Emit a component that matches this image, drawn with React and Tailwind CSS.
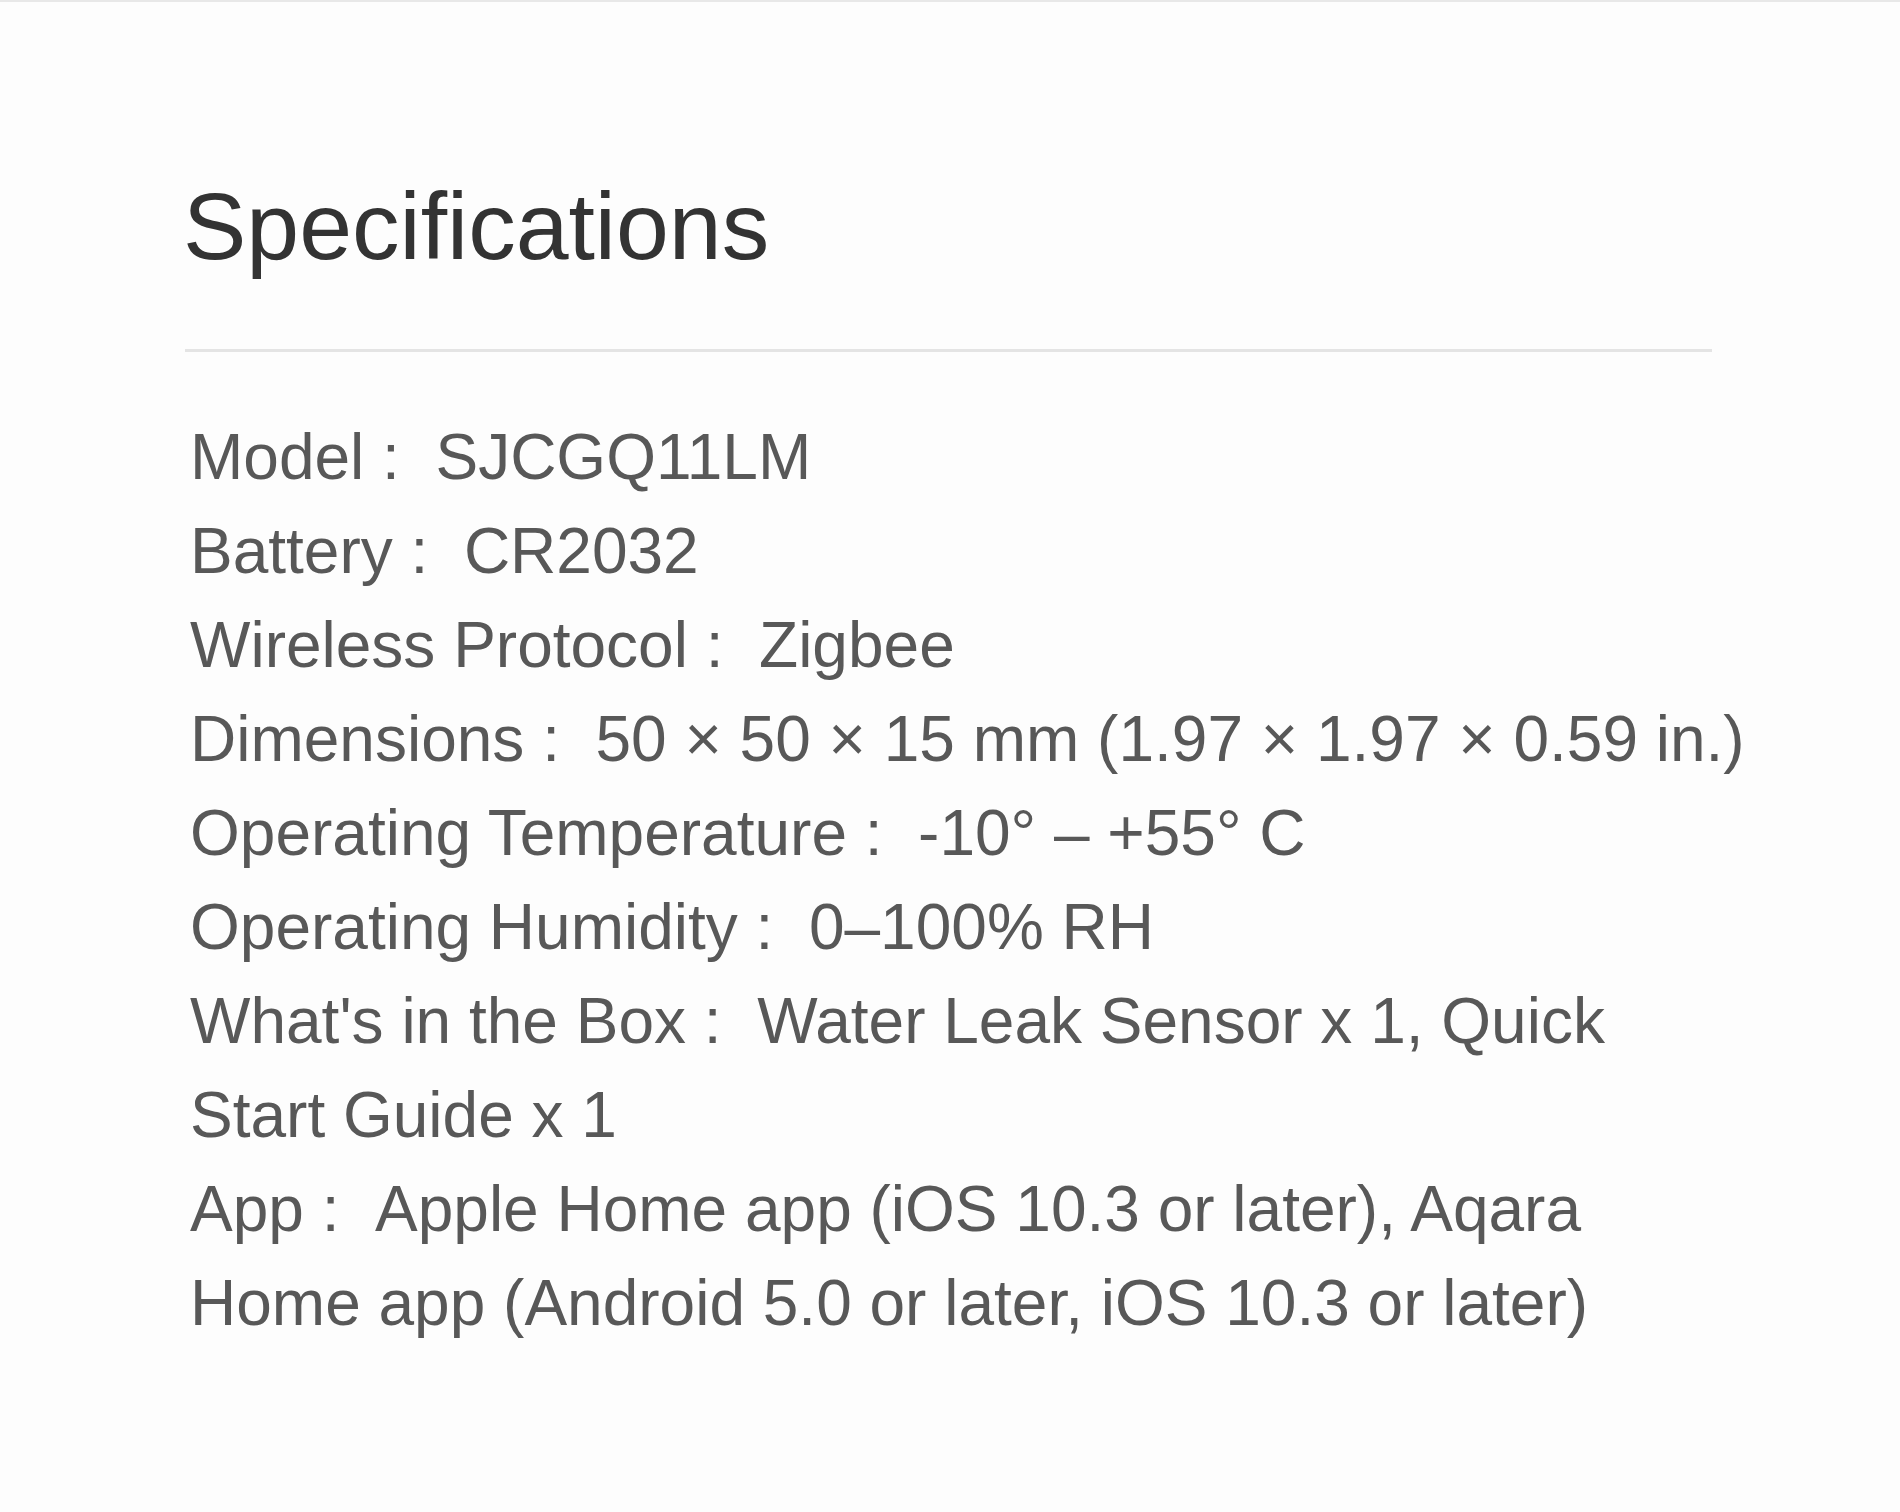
import React from 'react';

const SPECS = [
  { label: 'Model', value: ['SJCGQ11LM'] },
  { label: 'Battery', value: ['CR2032'] },
  { label: 'Wireless Protocol', value: ['Zigbee'] },
  {
    label: 'Dimensions',
    value: ['50 × 50 × 15 mm (1.97 × 1.97 × 0.59 in.)'],
  },
  { label: 'Operating Temperature', value: ['-10° – +55° C'] },
  { label: 'Operating Humidity', value: ['0–100% RH'] },
  {
    label: "What's in the Box",
    value: ['Water Leak Sensor x 1, Quick', 'Start Guide x 1'],
  },
  {
    label: 'App',
    value: [
      'Apple Home app (iOS 10.3 or later), Aqara',
      'Home app (Android 5.0 or later, iOS 10.3 or later)',
    ],
  },
];

export default function App() {
  return (
    <div
      className="min-h-[1512px] w-full bg-[#fdfdfd] border-t-2 border-[#e8e8e8]"
      style={{ fontFamily: '"Liberation Sans", Arial, sans-serif' }}
    >
      <div className="pl-[180px] pt-[177px]">
        <h2 className="pl-[3px] text-[95px] leading-[95px] text-[#333333] font-normal">
          Specifications
        </h2>

        <div className="ml-[5px] mt-[75px] w-[1527px] h-[3px] bg-[#e4e4e4]" />

        <div className="mt-[58px] pl-[10px] text-[64px] leading-[94px] text-[#585858]">
          {SPECS.map((s) => (
            <div key={s.label} className="whitespace-nowrap">
              <span>{s.label} :</span>
              {'\u00a0\u00a0'}
              {s.value.map((line, i) => (
                <React.Fragment key={i}>
                  {i > 0 && <br />}
                  <span>{line}</span>
                </React.Fragment>
              ))}
            </div>
          ))}
        </div>
      </div>
    </div>
  );
}
